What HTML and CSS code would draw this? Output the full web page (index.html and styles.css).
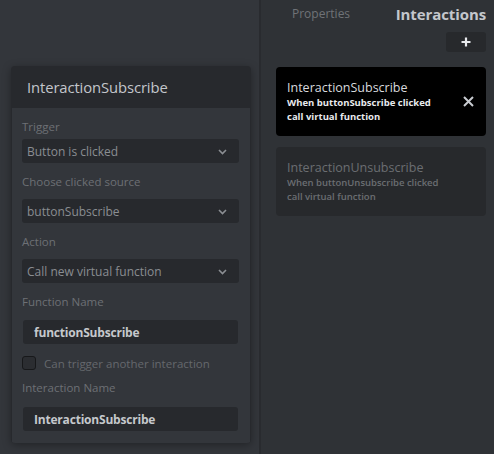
FILE: index.html
```html
<!DOCTYPE html>
<html>
<head>
<meta charset="utf-8">
<link rel="stylesheet" href="styles.css">
</head>
<body>
<div class="app">
  <div class="left">
    <div class="card">
      <div class="card-head">InteractionSubscribe</div>
      <div class="card-body">
        <div class="label first">Trigger</div>
        <div class="select"><span>Button is clicked</span><svg class="chev" width="9" height="6" viewBox="0 0 9 6"><path d="M1 1l3.5 3.5L8 1" fill="none" stroke="#8b8e93" stroke-width="1.6"/></svg></div>
        <div class="label">Choose clicked source</div>
        <div class="select"><span>buttonSubscribe</span><svg class="chev" width="9" height="6" viewBox="0 0 9 6"><path d="M1 1l3.5 3.5L8 1" fill="none" stroke="#8b8e93" stroke-width="1.6"/></svg></div>
        <div class="label">Action</div>
        <div class="select"><span>Call new virtual function</span><svg class="chev" width="9" height="6" viewBox="0 0 9 6"><path d="M1 1l3.5 3.5L8 1" fill="none" stroke="#8b8e93" stroke-width="1.6"/></svg></div>
        <div class="label tall">Function Name</div>
        <div class="input">functionSubscribe</div>
        <div class="check"><span class="box"></span><span>Can trigger another interaction</span></div>
        <div class="label taller">Interaction Name</div>
        <div class="input last">InteractionSubscribe</div>
      </div>
    </div>
  </div>
  <div class="divider"></div>
  <div class="right">
    <div class="tabs">
      <span class="tab">Properties</span>
      <span class="tab active">Interactions</span>
    </div>
    <div class="toolbar">
      <div class="add"><svg width="10" height="10" viewBox="0 0 10 10"><path d="M5 0.5v9M0.5 5h9" stroke="#e8eaed" stroke-width="2.2"/></svg></div>
    </div>
    <div class="item selected">
      <div class="item-text">
        <div class="item-title">InteractionSubscribe</div>
        <div class="item-sub">When buttonSubscribe clicked<br>call virtual function</div>
      </div>
      <svg class="close" width="11" height="11" viewBox="0 0 11 11"><path d="M1 1l9 9M10 1l-9 9" stroke="#c9ccd1" stroke-width="2"/></svg>
    </div>
    <div class="item">
      <div class="item-text">
        <div class="item-title">InteractionUnsubscribe</div>
        <div class="item-sub">When buttonUnsubscribe clicked<br>call virtual function</div>
      </div>
    </div>
  </div>
</div>
</body>
</html>
```

FILE: styles.css
```css
* { box-sizing: border-box; }
html, body { margin: 0; padding: 0; }
body {
  width: 494px;
  height: 454px;
  overflow: hidden;
  background: #33363b;
  font-family: "Open Sans", "Noto Sans", sans-serif;
}
.app { display: flex; height: 454px; }
.left {
  width: 259px;
  flex: none;
  padding: 66px 0 0 11px;
  background: #33363b;
}
.divider { width: 2px; flex: none; background: #292b2f; }
.right {
  flex: 1;
  background: #2f3236;
  padding: 0 8px 0 15px;
}
.card {
  width: 240px;
  border-radius: 4px;
  background: #27292d;
  box-shadow: 0 2px 8px rgba(0,0,0,0.35);
  overflow: hidden;
}
.card-head {
  height: 42px;
  padding: 11px 0 0 16px;
  color: #c3c6cb;
  font-size: 14.8px;
  letter-spacing: -0.1px;
}
.card-body {
  background: #33363b;
  margin: 0 1px;
  padding: 11px 11px 12px 10px;
}
.label {
  color: #6d7075;
  font-size: 11.5px;
  height: 25px;
  line-height: 16px;
}
.label.first { height: 20px; }
.label.tall { height: 26px; }
.label.taller { height: 27px; }
.select, .input {
  height: 24px;
  border-radius: 3px;
  background: #27292d;
  display: flex;
  align-items: center;
  justify-content: space-between;
  padding: 0 12px 0 5px;
  color: #8a8d92;
  font-size: 12px;
  margin-bottom: 11px;
}
.input {
  margin: 0 1px 12px 1px;
  padding-left: 11px;
  color: #c5c8cc;
  font-weight: 700;
  font-size: 12px;
  letter-spacing: -0.2px;
}
.input.last { margin-bottom: 0; }
.chev { margin-top: 1px; }
.check {
  display: flex;
  align-items: center;
  height: 14px;
  margin-bottom: 10px;
  color: #65686d;
  font-size: 11.5px;
}
.box {
  width: 14px;
  height: 14px;
  border: 1px solid #17181a;
  border-radius: 3px;
  background: #2b2d31;
  margin-right: 8px;
}
.tabs {
  height: 30px;
  display: flex;
  align-items: center;
  justify-content: space-between;
  padding: 0 0 3px 16px;
}
.tab { color: #6f7277; font-size: 12px; }
.tab.active { color: #c4c7cc; font-weight: 700; font-size: 15px; letter-spacing: -0.1px; }
.toolbar { display: flex; justify-content: flex-end; height: 37px; padding-top: 2px; }
.add {
  width: 40px;
  height: 20px;
  border-radius: 3px;
  background: #27292c;
  display: flex;
  align-items: center;
  justify-content: center;
}
.item {
  height: 69px;
  border-radius: 4px;
  background: #27292c;
  display: flex;
  align-items: flex-start;
  justify-content: space-between;
  padding: 12px 12px 0 11px;
  margin-bottom: 11px;
}
.item.selected { background: #000; }
.item-title { font-size: 12.5px; color: #6b6e72; line-height: 17px; }
.item-sub { font-size: 9.5px; color: #6b6e72; line-height: 14px; font-weight: 600; }
.selected .item-title { color: #d8dade; }
.selected .item-sub { color: #e8eaed; font-weight: 700; }
.close { margin-top: 17px; }
```
